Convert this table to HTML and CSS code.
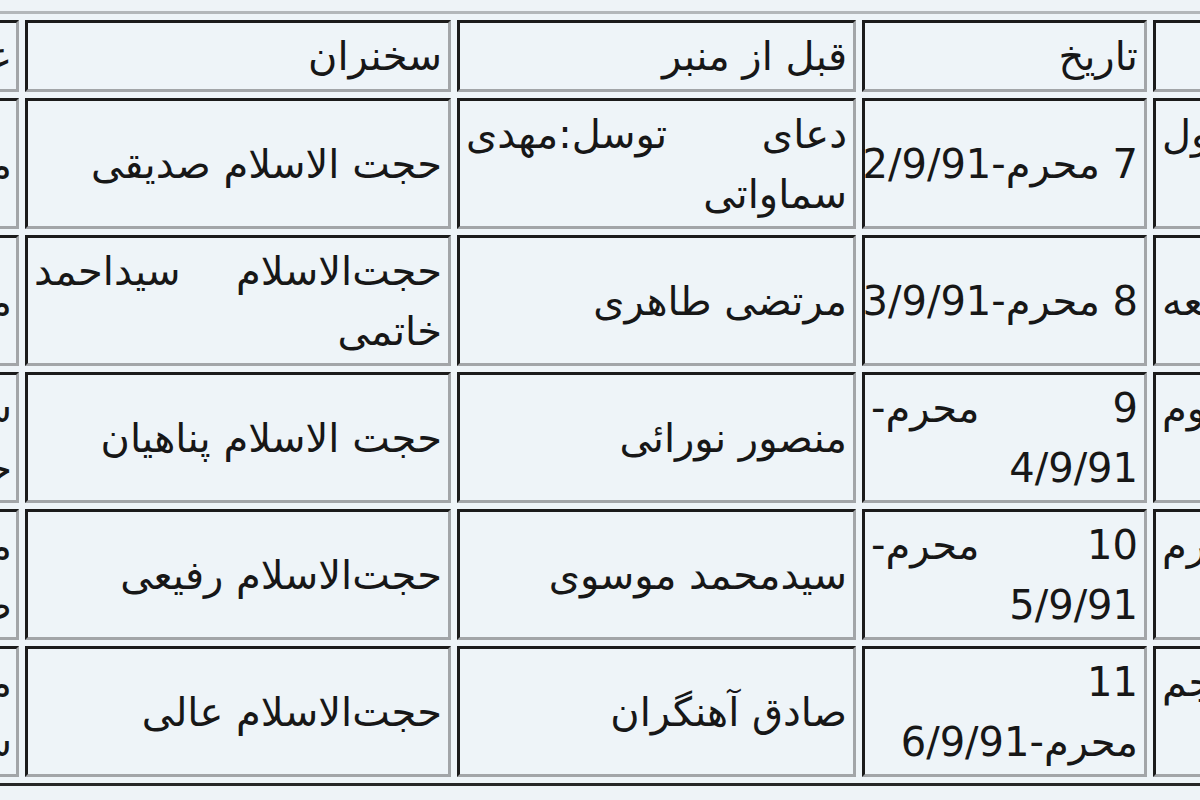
FILE: index.html
```html
<!DOCTYPE html>
<html lang="fa">
<head>
<meta charset="utf-8">
<title>برنامه مراسم محرم</title>
<link rel="stylesheet" href="styles.css">
</head>
<body>
<table class="sched">
  <thead>
    <tr class="head-row">
      <th class="c-day">روز</th>
      <th class="c-date">تاریخ</th>
      <th class="c-pre">قبل از منبر</th>
      <th class="c-spk">سخنران</th>
      <th class="c-sub">عنوان</th>
    </tr>
  </thead>
  <tbody>
    <tr class="row">
      <td><div class="end">اول</div><div>شب</div></td>
      <td>7 محرم-2/9/91</td>
      <td><div class="jl">دعای توسل:مهدی</div><div>سماواتی</div></td>
      <td>حجت الاسلام صدیقی</td>
      <td class="sub">مداحی</td>
    </tr>
    <tr class="row">
      <td><div class="end">جمعه</div></td>
      <td>8 محرم-3/9/91</td>
      <td>مرتضی طاهری</td>
      <td><div class="jl">حجت‌الاسلام سیداحمد</div><div>خاتمی</div></td>
      <td class="sub">مداحی</td>
    </tr>
    <tr class="row">
      <td><div class="end">سوم</div><div>شب</div></td>
      <td><div class="jl">9 محرم-</div><div>4/9/91</div></td>
      <td>منصور نورائی</td>
      <td>حجت الاسلام پناهیان</td>
      <td class="sub"><div>سید</div><div>حاج</div></td>
    </tr>
    <tr class="row">
      <td><div class="end">چهارم</div><div>شب</div></td>
      <td><div class="jl">10 محرم-</div><div>5/9/91</div></td>
      <td>سیدمحمد موسوی</td>
      <td>حجت‌الاسلام رفیعی</td>
      <td class="sub"><div>مداحی</div><div>صالحی</div></td>
    </tr>
    <tr class="row">
      <td><div class="end">پنجم</div><div>شب</div></td>
      <td><div>11</div><div>محرم-6/9/91</div></td>
      <td>صادق آهنگران</td>
      <td>حجت‌الاسلام عالی</td>
      <td class="sub"><div>مداحی</div><div>سید</div></td>
    </tr>
  </tbody>
</table>
</body>
</html>
```
FILE: styles.css
```css
html, body {
  margin: 0;
  padding: 0;
}

body {
  width: 1200px;
  height: 800px;
  overflow: hidden;
  background: #eef3f7;
  font-family: "DejaVu Sans", Tahoma, sans-serif;
}

.sched {
  direction: rtl;
  border-collapse: separate;
  border-spacing: 6px;
  table-layout: fixed;
  width: 1452px;
  margin: 11px 0 0 -140px;
  border: 3px solid;
  border-color: #b3b7ba #262626 #262626 #b3b7ba;
  background: #eef4f8;
}

.sched th,
.sched td {
  box-sizing: border-box;
  border: 3px solid;
  border-color: #1b1b1b #a2a5a8 #a2a5a8 #1b1b1b;
  padding: 2px 6px;
  background: #eef4f8;
  color: #171717;
  font-size: 40px;
  font-weight: normal;
  line-height: 60px;
  text-align: right;
  vertical-align: middle;
  white-space: nowrap;
  overflow: hidden;
}

.sched .c-sub,
.sched .sub {
  padding-right: 4px;
}

.head-row {
  height: 72px;
}

.row {
  height: 131px;
}

.c-day { width: 150px; }
.c-date { width: 285px; }
.c-pre { width: 399px; }
.c-spk { width: 426px; }
.c-sub { width: 150px; }

.jl {
  text-align: justify;
  text-align-last: justify;
}

.end {
  text-align: left;
}
```
